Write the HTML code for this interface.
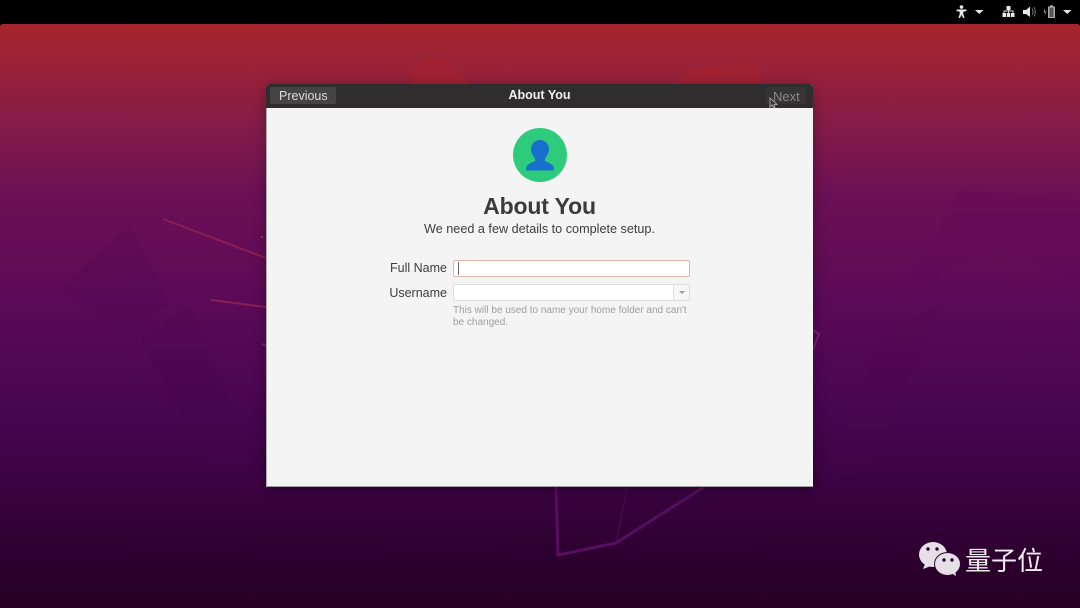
<!DOCTYPE html>
<html lang="en">
<head>
<meta charset="utf-8">
<title>About You</title>
<style>
html,body{margin:0;padding:0;width:1080px;height:608px;overflow:hidden;background:#000}
body{position:relative;font-family:"Liberation Sans",sans-serif}
#bg{position:absolute;left:0;top:0}
.t{position:absolute;white-space:nowrap;line-height:1}
#win{position:absolute;left:266px;top:84px;width:547px;height:403px;border-radius:4px 4px 0 0;box-shadow:0 3px 14px rgba(0,0,0,.3);overflow:hidden;background:#f4f4f4}
#hdr{position:absolute;left:0;top:0;width:547px;height:24px;background:#2f2d2d}
#prev{position:absolute;left:4px;top:3px;width:66px;height:17px;background:#454343;border-radius:2px}
#next{position:absolute;left:500px;top:3px;width:40px;height:17px;background:#363434;border-radius:2px}
.field{position:absolute;box-sizing:border-box;background:#fff}
</style>
</head>
<body>
<svg id="bg" width="1080" height="608" viewBox="0 0 1080 608">
<defs>
<linearGradient id="g" x1="0" y1="24" x2="0" y2="608" gradientUnits="userSpaceOnUse">
<stop offset="0" stop-color="#a6252c"/>
<stop offset=".07" stop-color="#9a2236"/>
<stop offset=".17" stop-color="#851c48"/>
<stop offset=".29" stop-color="#6c1055"/>
<stop offset=".47" stop-color="#5c0a57"/>
<stop offset=".64" stop-color="#4a0652"/>
<stop offset=".8" stop-color="#3a0340"/>
<stop offset=".93" stop-color="#2b002c"/>
<stop offset="1" stop-color="#270026"/>
</linearGradient>
</defs>
<rect width="1080" height="608" fill="#000"/>
<path d="M0 27Q0 24 3 24H1077Q1080 24 1080 27V608H0Z" fill="url(#g)"/>
<!-- faint facets -->
<path d="M60 290L130 225L170 304L120 330Z" fill="#4d0650" opacity=".18"/>
<path d="M140 340L190 304L255 470L210 470Z" fill="#450550" opacity=".2"/>
<path d="M900 300L1000 235L1080 290V200L960 190Z" fill="#5e0a5c" opacity=".15"/>
<path d="M820 480L880 340L940 304L870 470Z" fill="#4e0852" opacity=".15"/>
<!-- top shapes -->
<path d="M412 84V67L430 58L446 60L470 84Z" fill="#a5222f" opacity=".6"/>
<path d="M672 84L700 66L758 63L762 84Z" fill="#a5222f" opacity=".55"/>
<!-- lines -->
<path d="M163 219L266 258" stroke="#8a1f52" stroke-width="2" fill="none"/>
<path d="M211 300L266 307" stroke="#8a1f52" stroke-width="2" fill="none"/>
<path d="M262 344.500H266" stroke="#8c1e62" stroke-width="2"/>
<path d="M261 237h2" stroke="#7a8a70" stroke-width="1"/>
<path d="M813 330L819 334L813 350" stroke="#801d72" stroke-width="2" fill="none"/>
<path d="M556 487L558 555L616 543L704 487" stroke="#560e60" stroke-width="3" fill="none"/>
<path d="M627 487L616 543" stroke="#4e0c58" stroke-width="1" fill="none"/>
<!-- tray icons -->
<g fill="#e8e8e8">
<circle cx="961.500" cy="7" r="1.800"/>
<path d="M956.500 9.500L966.500 9.500L966.500 11L963.300 11.800V14L964.500 18H963L961.500 14.800L960 18H958.500L959.700 14V11.800L956.500 11Z"/>
<path d="M975 10H983.500L979.250 14Z"/>
<path d="M1006.500 6H1010.500V10H1006.500ZM1002.500 13H1006V17H1002.500ZM1006.800 13H1010.200V17H1006.800ZM1011 13H1014.500V17H1011Z"/>
<path d="M1004 13V11H1013V13M1008.500 10V13" stroke="#e8e8e8" stroke-width=".9" fill="none"/>
<path d="M1023 10H1026L1030 6.500V17L1026 14H1023Z"/>
<path d="M1032 8.500Q1034 12 1032 15M1034 7Q1036.500 12 1034 16.500" stroke="#777" stroke-width="1" fill="none"/>
<path d="M1048 6.500H1055V18H1048Z" fill="#aaa"/>
<rect x="1050" y="5.500" width="3" height="1.200" fill="#ccc"/>
<rect x="1049.500" y="7.500" width="4" height="9.500" fill="#555"/>
<path d="M1045 8L1043.500 12.500H1045.200L1044.500 16L1046.500 11.500H1045Z" fill="#999"/>
<path d="M1063 10H1071.500L1067.250 14Z"/>
</g>
<!-- WeChat -->
<g fill="#e6e0e6">
<ellipse cx="933" cy="554.500" rx="14" ry="12.500"/>
<path d="M925 564L923 569L931 566Z"/>
</g>
<ellipse cx="947.500" cy="564" rx="13.500" ry="12" fill="#2e0430"/>
<g fill="#e6e0e6">
<ellipse cx="947.500" cy="564" rx="12.500" ry="11"/>
<path d="M951 573L956 576L955 570Z"/>
</g>
<g fill="#2e0430">
<circle cx="928" cy="549" r="1.700"/><circle cx="937" cy="549" r="1.700"/>
<circle cx="944" cy="560" r="1.700"/><circle cx="952" cy="560" r="1.700"/>
</g>
</svg>

<div class="t" style="left:965px;top:545px;font:26px/30px 'Noto Sans CJK SC','WenQuanYi Zen Hei',sans-serif;color:#f0ecf0">量子位</div>

<div id="win">
  <div id="hdr">
    <div id="prev"></div>
    <div id="next"></div>
    <div class="t" style="left:13px;top:5px;font-size:12.500px;line-height:15px;color:#dcdcdc">Previous</div>
    <div class="t" style="left:0;width:547px;text-align:center;top:4px;font-size:12.500px;line-height:15px;font-weight:bold;color:#f0f0f0">About You</div>
    <div class="t" style="left:507px;top:5px;font-size:13px;line-height:15px;color:#8a8888">Next</div>
    <svg style="position:absolute;left:503px;top:13px" width="10" height="12" viewBox="0 0 10 12"><path d="M1 1V10L3 8L5 11H6L5 7.500H8Z" fill="#333" stroke="#bbb" stroke-width=".8"/></svg>
  </div>
  <svg style="position:absolute;left:247px;top:44px" width="54" height="54" viewBox="0 0 54 54">
    <circle cx="27" cy="27" r="27" fill="#2fcb7d"/>
    <path d="M27 12C22 12 18 16 18 21C18 25 20 28 22 30V33C18 35 14.500 36 13.500 39L13 42.500H41L40.500 39C39.500 36 36 35 32 33V30C34 28 36 25 36 21C36 16 32 12 27 12Z" fill="#1670cc"/>
  </svg>
  <div class="t" style="left:0;width:547px;text-align:center;top:109px;font-size:23px;letter-spacing:-.15px;line-height:27px;font-weight:bold;color:#3b3b3b">About You</div>
  <div class="t" style="left:0;width:547px;text-align:center;top:137px;font-size:12.650px;line-height:16px;color:#3d3d3d">We need a few details to complete setup.</div>
  <div class="t" style="right:366px;top:177px;font-size:12.500px;line-height:15px;color:#3d3d3d">Full Name</div>
  <div class="t" style="right:366px;top:202px;font-size:12.500px;line-height:15px;color:#3d3d3d">Username</div>
  <div class="field" style="left:187px;top:176px;width:237px;height:17px;border:1px solid #dcb9ab;border-radius:2px"></div>
  <div style="position:absolute;left:192px;top:178px;width:1px;height:13px;background:#666"></div>
  <div class="field" style="left:187px;top:200px;width:237px;height:17px;border:1px solid #dedede;border-radius:2px"></div>
  <div style="position:absolute;left:407px;top:200px;width:17px;height:17px;box-sizing:border-box;background:#f6f6f6;border:1px solid #dedede;border-radius:0 2px 2px 0"></div>
  <div style="position:absolute;left:413px;top:207px;width:0;height:0;border-left:3px solid transparent;border-right:3px solid transparent;border-top:3px solid #999"></div>
  <div class="t" style="left:187px;top:221px;font-size:10px;line-height:12px;color:#a09e9e">This will be used to name your home folder and can't</div>
  <div class="t" style="left:187px;top:233px;font-size:10px;line-height:12px;color:#a09e9e">be changed.</div>
  <div style="position:absolute;left:0;top:24px;width:1px;height:379px;background:#b0b0b0"></div>
  <div style="position:absolute;left:0;bottom:0;width:547px;height:1px;background:#a0a0a0"></div>
</div>
</body>
</html>
